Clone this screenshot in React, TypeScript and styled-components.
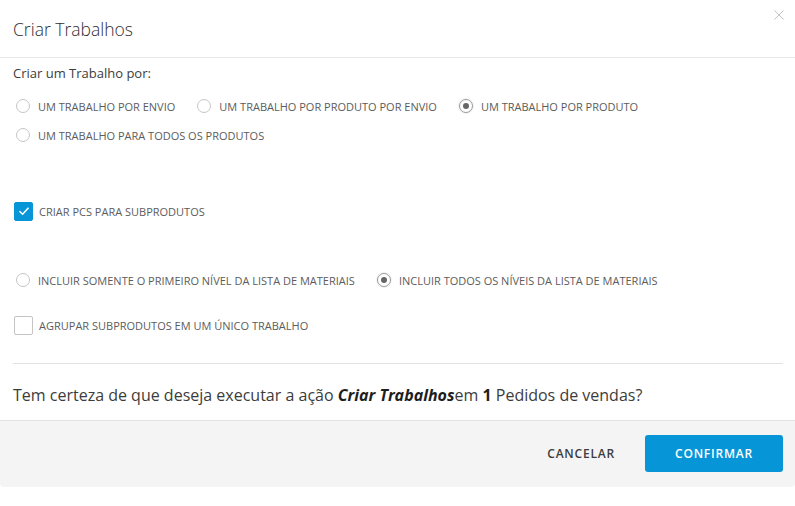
import React from 'react';
import styled, { createGlobalStyle } from 'styled-components';

const Global = createGlobalStyle`
  html, body { margin: 0; padding: 0; background: #ffffff; }
  body { font-family: "Open Sans", "Noto Sans", sans-serif; color: #3c3c3c; }
  * { box-sizing: border-box; }
`;

const Dialog = styled.div`
  width: 795px;
  background: #ffffff;
  border-radius: 0 0 4px 4px;
  overflow: hidden;
`;

const Header = styled.header`
  height: 58px;
  border-bottom: 1px solid #e6e6e6;
  display: flex;
  align-items: center;
  justify-content: space-between;
  padding: 0 10px 0 13px;
`;

const Title = styled.h1`
  margin: 0;
  font-size: 17.5px;
  font-weight: 300;
  line-height: 24px;
  color: #2e2e2e;
`;

const CloseButton = styled.button`
  align-self: flex-start;
  margin-top: 9px;
  width: 12px;
  height: 12px;
  padding: 0;
  border: none;
  background: none;
  display: flex;
  align-items: center;
  justify-content: center;
`;

const Body = styled.div`
  padding: 0 12px 0 13px;
  display: flex;
  flex-direction: column;
`;

const Label = styled.div`
  margin-top: 5px;
  font-size: 13px;
  line-height: 20px;
  color: #3c3c3c;
`;

const OptionRow = styled.div<{ $top: number }>`
  margin-top: ${p => p.$top}px;
  display: flex;
  flex-wrap: wrap;
  column-gap: 19px;
  row-gap: 9px;
`;

const Option = styled.label`
  display: flex;
  align-items: center;
  height: 20px;
  font-size: 11px;
  text-transform: uppercase;
  color: #5c5c5c;
  white-space: nowrap;
`;

const Radio = styled.span<{ $checked?: boolean }>`
  width: 14px;
  height: 14px;
  margin-left: 3px;
  margin-right: 8px;
  border-radius: 50%;
  border: 1px solid ${p => (p.$checked ? '#9a9a9a' : '#c6c6c6')};
  box-shadow: ${p => (p.$checked ? '0 0 0 1px rgba(0,0,0,0.06)' : 'none')};
  display: flex;
  align-items: center;
  justify-content: center;
  &::after {
    content: '';
    width: 6px;
    height: 6px;
    border-radius: 50%;
    background: ${p => (p.$checked ? '#666666' : 'transparent')};
  }
`;

const Box = styled.span<{ $checked?: boolean }>`
  width: 19px;
  height: 19px;
  margin-left: 1px;
  margin-right: 6px;
  border-radius: 2px;
  border: 1px solid ${p => (p.$checked ? '#0696d7' : '#c4c4c4')};
  background: ${p => (p.$checked ? '#0696d7' : '#ffffff')};
  display: flex;
  align-items: center;
  justify-content: center;
`;

const Divider = styled.hr`
  margin: 28px 0 0;
  border: none;
  border-top: 1px solid #e2e2e2;
  height: 0;
`;

const Question = styled.p`
  margin: 19px 0 0;
  font-size: 16px;
  line-height: 24px;
  color: #3c3c3c;
  b { font-weight: 700; color: #1e1e1e; }
  i { font-weight: 700; font-style: italic; color: #1e1e1e; }
`;

const Footer = styled.footer`
  margin-top: 13px;
  height: 67px;
  background: #f4f4f4;
  border-top: 1px solid #e2e2e2;
  display: flex;
  align-items: flex-start;
  justify-content: flex-end;
  gap: 30px;
  padding: 14px 12px 0 0;
`;

const Button = styled.button<{ $primary?: boolean }>`
  height: 37px;
  min-width: ${p => (p.$primary ? '138px' : '0')};
  padding: 0 ${p => (p.$primary ? '20px' : '0')};
  border: none;
  border-radius: 3px;
  background: ${p => (p.$primary ? '#0696d7' : 'transparent')};
  color: ${p => (p.$primary ? '#ffffff' : '#3c3c3c')};
  font-family: "Open Sans", "Noto Sans", sans-serif;
  font-size: 12px;
  font-weight: 600;
  letter-spacing: 0.8px;
  text-transform: uppercase;
  cursor: pointer;
`;

const CheckIcon = () => (
  <svg width="12" height="10" viewBox="0 0 12 10">
    <path d="M1.5 5.2 L4.6 8.2 L10.5 1.8" fill="none" stroke="#fff" strokeWidth="1.6" />
  </svg>
);

const XIcon = () => (
  <svg width="10" height="10" viewBox="0 0 10 10">
    <path d="M0.5 0.5 L9.5 9.5 M9.5 0.5 L0.5 9.5" stroke="#c2c2c2" strokeWidth="1" />
  </svg>
);

export default function App() {
  return (
    <>
      <Global />
      <Dialog>
        <Header>
          <Title>Criar Trabalhos</Title>
          <CloseButton aria-label="Fechar"><XIcon /></CloseButton>
        </Header>
        <Body>
          <Label>Criar um Trabalho por:</Label>
          <OptionRow $top={13}>
            <Option><Radio />Um trabalho por envio</Option>
            <Option><Radio />Um trabalho por produto por envio</Option>
            <Option><Radio $checked />Um trabalho por produto</Option>
            <Option><Radio />Um trabalho para todos os produtos</Option>
          </OptionRow>
          <OptionRow $top={56}>
            <Option><Box $checked><CheckIcon /></Box>Criar PCs para subprodutos</Option>
          </OptionRow>
          <OptionRow $top={49}>
            <Option><Radio />Incluir somente o primeiro nível da lista de materiais</Option>
            <Option><Radio $checked />Incluir todos os níveis da lista de materiais</Option>
          </OptionRow>
          <OptionRow $top={25}>
            <Option><Box />Agrupar subprodutos em um único trabalho</Option>
          </OptionRow>
          <Divider />
          <Question>
            Tem certeza de que deseja executar a ação <i>Criar Trabalhos</i>em <b>1</b> Pedidos de vendas?
          </Question>
        </Body>
        <Footer>
          <Button>Cancelar</Button>
          <Button $primary>Confirmar</Button>
        </Footer>
      </Dialog>
    </>
  );
}
